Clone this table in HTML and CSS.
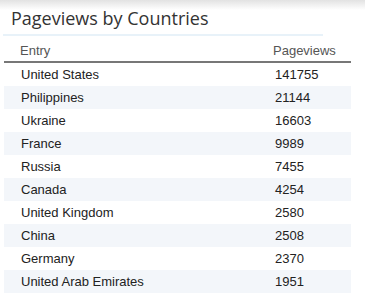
FILE: index.html
```html
<!DOCTYPE html>
<html>
<head>
<meta charset="utf-8">
<link rel="stylesheet" href="styles.css">
</head>
<body>
<div class="shade"></div>
<div class="panel">
  <h2 class="title">Pageviews by Countries</h2>
  <div class="rule"></div>
  <table class="grid">
    <thead>
      <tr><th class="c1">Entry</th><th class="c2">Pageviews</th></tr>
    </thead>
    <tbody>
      <tr><td class="c1">United States</td><td class="c2 num">141755</td></tr>
      <tr><td class="c1">Philippines</td><td class="c2 num">21144</td></tr>
      <tr><td class="c1">Ukraine</td><td class="c2 num">16603</td></tr>
      <tr><td class="c1">France</td><td class="c2 num">9989</td></tr>
      <tr><td class="c1">Russia</td><td class="c2 num">7455</td></tr>
      <tr><td class="c1">Canada</td><td class="c2 num">4254</td></tr>
      <tr><td class="c1">United Kingdom</td><td class="c2 num">2580</td></tr>
      <tr><td class="c1">China</td><td class="c2 num">2508</td></tr>
      <tr><td class="c1">Germany</td><td class="c2 num">2370</td></tr>
      <tr><td class="c1">United Arab Emirates</td><td class="c2 num">1951</td></tr>
    </tbody>
  </table>
</div>
</body>
</html>
```
FILE: styles.css
```css
html, body {
  margin: 0;
  padding: 0;
  background: #ffffff;
}
body {
  width: 366px;
  height: 301px;
  overflow: hidden;
  position: relative;
}
.shade {
  position: absolute;
  left: 0;
  top: 0;
  width: 365px;
  height: 10px;
  background: linear-gradient(to bottom, #e2e2e2, rgba(255,255,255,0));
}
.panel {
  padding: 0 15px 0 4px;
}
.title {
  margin: 0;
  padding: 6px 0 0 7px;
  height: 28px;
  box-sizing: border-box;
  font-family: "Open Sans", sans-serif;
  font-weight: normal;
  font-size: 18px;
  line-height: 24px;
  color: #333333;
}
.rule {
  margin: 6px 28px 0 -1px;
  height: 2px;
  background: #e8f2f9;
}
.grid {
  width: 347px;
  border-collapse: separate;
  border-spacing: 0;
  font-family: "Liberation Sans", Arial, sans-serif;
  font-size: 13px;
}
.grid th {
  font-weight: normal;
  text-align: left;
  color: #555555;
  padding: 4px 0 0 0;
  line-height: 21px;
  vertical-align: top;
  border-bottom: 2px solid #777777;
}
.grid th.c1 { padding-left: 16px; }
.grid th.c2 { padding-left: 0; width: 78px; }
.grid td {
  padding: 0;
  line-height: 23px;
  color: #222222;
  vertical-align: top;
}
.grid td.c1 { padding-left: 17px; }
.grid td.num { padding-left: 2px; }
.grid tbody tr:nth-child(even) td {
  background: #f3f6fa;
}
```
